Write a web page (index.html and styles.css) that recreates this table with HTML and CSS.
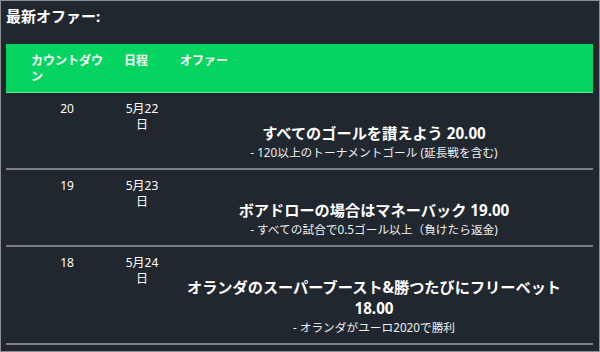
FILE: index.html
```html
<!DOCTYPE html>
<html lang="ja">
<head>
<meta charset="utf-8">
<link rel="stylesheet" href="styles.css">
</head>
<body>
<div class="page">
  <h2 class="title">最新オファー:</h2>
  <div class="table">
    <div class="row head">
      <div class="c1">カウントダウン</div>
      <div class="c2">日程</div>
      <div class="c3">オファー</div>
    </div>
    <div class="row">
      <div class="c1">20</div>
      <div class="c2">5月22日</div>
      <div class="c3 offer">
        <div class="offer-title">すべてのゴールを讃えよう 20.00</div>
        <div class="offer-sub">- 120以上のトーナメントゴール (延長戦を含む)</div>
      </div>
    </div>
    <div class="row">
      <div class="c1">19</div>
      <div class="c2">5月23日</div>
      <div class="c3 offer">
        <div class="offer-title">ボアドローの場合はマネーバック 19.00</div>
        <div class="offer-sub">- すべての試合で0.5ゴール以上（負けたら返金)</div>
      </div>
    </div>
    <div class="row">
      <div class="c1">18</div>
      <div class="c2">5月24日</div>
      <div class="c3 offer">
        <div class="offer-title">オランダのスーパーブースト&amp;勝つたびにフリーベット 18.00</div>
        <div class="offer-sub">- オランダがユーロ2020で勝利</div>
      </div>
    </div>
  </div>
</div>
</body>
</html>
```

FILE: styles.css
```css
html, body {
  margin: 0;
  padding: 0;
  background: #21272e;
}
.page {
  box-sizing: border-box;
  width: 600px;
  height: 352px;
  border: 1px solid #8e8e8e;
  padding: 5px 6px 0 5px;
  background: #21272e;
  color: #ffffff;
  font-family: "Noto Sans", "Noto Sans CJK JP", sans-serif;
  overflow: hidden;
}
.title {
  margin: 0 0 18px 0;
  font-size: 15px;
  line-height: 20px;
  font-weight: 700;
}
.row {
  display: grid;
  grid-template-columns: 108px 56px 1fr;
  border-bottom: 2px solid #7b8085;
  font-size: 12px;
  line-height: 16px;
}
.row.head {
  background: #05d461;
  border-bottom: 1px solid #63e59c;
  font-weight: 700;
  padding: 9px 0 7px;
}
.c1 {
  padding: 0 11px 0 25px;
}
.c2 {
  padding: 0 10px;
}
.c3 {
  padding: 0 25px 0 10px;
}
.row:not(.head) .c1,
.row:not(.head) .c2 {
  text-align: center;
  padding-top: 8px;
}
.offer {
  text-align: center;
  padding-top: 30px;
  padding-bottom: 8px;
}
.offer-title {
  font-size: 15.2px;
  line-height: 21px;
  font-weight: 700;
}
.offer-sub {
  font-size: 11.7px;
  line-height: 16px;
  color: #eef0f2;
}
```
